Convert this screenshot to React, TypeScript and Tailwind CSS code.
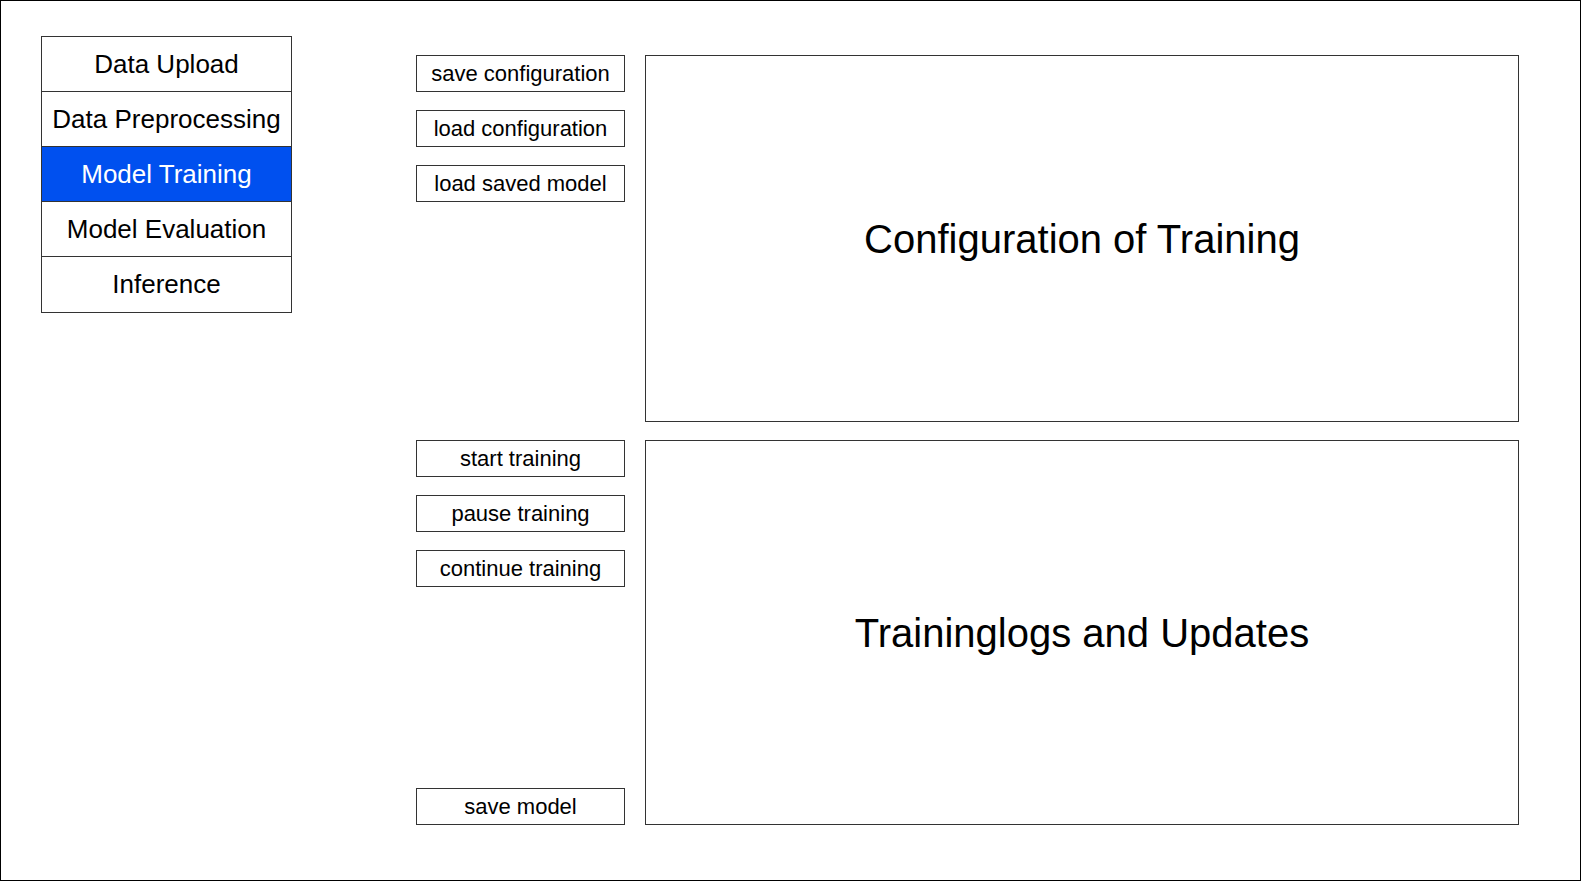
import React from 'react';

const navItems = ['Data Upload', 'Data Preprocessing', 'Model Training', 'Model Evaluation', 'Inference'];

const ActionButton = ({ label }: { label: string }) => (
  <button className="h-[37px] w-full border border-[#333] bg-white text-[22px] leading-none text-black">
    {label}
  </button>
);

const Panel = ({ title }: { title: string }) => (
  <div className="flex h-full w-[874px] items-center justify-center border border-[#333] bg-white">
    <h2 className="text-[40px] leading-none text-black">{title}</h2>
  </div>
);

const App = () => {
  return (
    <div className="flex h-[881px] w-[1581px] items-start border border-black bg-white font-['Liberation_Sans',Arial,sans-serif]">
      <nav className="ml-[40px] mt-[35px] flex w-[251px] flex-col border border-[#333]">
        {navItems.map((item, i) => (
          <div
            key={item}
            className={`flex h-[55px] items-center justify-center text-[26px] ${
              i < navItems.length - 1 ? 'border-b border-[#333]' : ''
            } ${item === 'Model Training' ? 'bg-[#0050ef] text-white' : 'bg-white text-black'}`}
          >
            {item}
          </div>
        ))}
      </nav>

      <div className="ml-[124px] mt-[54px] flex flex-col gap-[18px]">
        <div className="flex h-[367px] gap-[20px]">
          <div className="flex w-[209px] flex-col gap-[18px]">
            <ActionButton label="save configuration" />
            <ActionButton label="load configuration" />
            <ActionButton label="load saved model" />
          </div>
          <Panel title="Configuration of Training" />
        </div>

        <div className="flex h-[385px] gap-[20px]">
          <div className="flex w-[209px] flex-col justify-between">
            <div className="flex flex-col gap-[18px]">
              <ActionButton label="start training" />
              <ActionButton label="pause training" />
              <ActionButton label="continue training" />
            </div>
            <ActionButton label="save model" />
          </div>
          <Panel title="Traininglogs and Updates" />
        </div>
      </div>
    </div>
  );
};

export default App;
